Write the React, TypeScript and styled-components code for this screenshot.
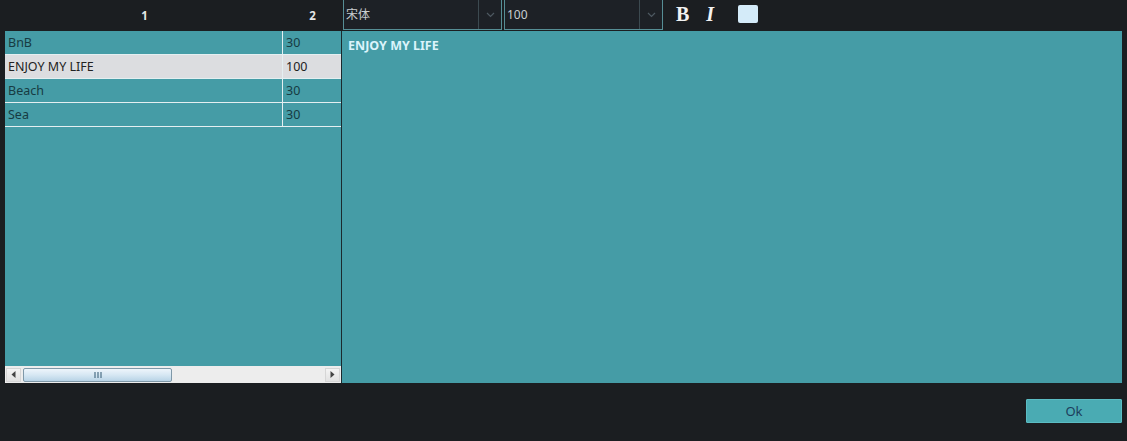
import styled, { createGlobalStyle } from 'styled-components'

const GlobalStyle = createGlobalStyle`
  html, body {
    margin: 0;
    padding: 0;
    background: #1b1e21;
  }
  body {
    font-family: "Noto Sans", "Noto Sans CJK SC", sans-serif;
    font-size: 12.5px;
  }
`

const Window = styled.div`
  width: 1127px;
  height: 441px;
  display: flex;
  flex-direction: column;
  background: #1b1e21;
  overflow: hidden;
`

const Main = styled.div`
  display: flex;
  padding-left: 5px;
  padding-right: 5px;
`

const LeftPane = styled.div`
  width: 336px;
  display: flex;
  flex-direction: column;
`

const HeaderRow = styled.div`
  height: 31px;
  display: flex;
  align-items: center;
  color: #e6e6e6;
  font-weight: 700;
  font-size: 11.5px;
`

const HeaderCell = styled.div<{ $width: number }>`
  width: ${({ $width }) => $width}px;
  text-align: center;
`

const TableBody = styled.div`
  height: 352px;
  background: #459ca6;
  display: flex;
  flex-direction: column;
`

const Rows = styled.div`
  flex: 1;
`

const Row = styled.div<{ $selected?: boolean }>`
  display: flex;
  height: 23px;
  border-bottom: 1px solid #e4eff1;
  background: ${({ $selected }) => ($selected ? '#dcdde0' : 'transparent')};
  color: ${({ $selected }) => ($selected ? '#222' : '#173b42')};
`

const Cell = styled.div<{ $width?: number }>`
  ${({ $width }) => ($width ? `width: ${$width}px;` : 'flex: 1;')}
  padding-left: 3px;
  line-height: 23px;
  white-space: nowrap;
  overflow: hidden;
  box-sizing: border-box;
  & + & {
    border-left: 1px solid #e4eff1;
  }
`

const ScrollBar = styled.div`
  height: 17px;
  background: #ededed;
  display: flex;
  align-items: center;
  padding: 0 1px;
  gap: 2px;
`

const ArrowButton = styled.div`
  width: 15px;
  height: 14px;
  box-sizing: border-box;
  border: 1px solid #d6d6d6;
  background: linear-gradient(#f4f4f4, #e2e2e2);
  display: flex;
  align-items: center;
  justify-content: center;
`

const Thumb = styled.div`
  width: 149px;
  height: 14px;
  box-sizing: border-box;
  border: 1px solid #7f98a8;
  border-radius: 2px;
  background: linear-gradient(#eef5fb, #d6e7f3 50%, #b8d3e6);
  display: flex;
  align-items: center;
  justify-content: center;
`

const Track = styled.div`
  flex: 1;
`

const RightPane = styled.div`
  flex: 1;
  display: flex;
  flex-direction: column;
`

const Toolbar = styled.div`
  height: 31px;
  display: flex;
  align-items: flex-start;
  padding-left: 2px;
`

const Combo = styled.div<{ $ml?: number }>`
  width: 159px;
  height: 31px;
  margin-top: -1px;
  margin-left: ${({ $ml }) => $ml ?? 0}px;
  box-sizing: border-box;
  border: 1px solid #568e95;
  background: #1d2126;
  display: flex;
  color: #c9cdd0;
  font-size: 12px;
`

const ComboText = styled.div`
  flex: 1;
  padding-left: 2px;
  line-height: 29px;
`

const ComboArrow = styled.div`
  width: 22px;
  border-left: 1px solid #3c4a50;
  display: flex;
  align-items: center;
  justify-content: center;
`

const StyleButton = styled.div<{ $italic?: boolean; $ml: number }>`
  margin-left: ${({ $ml }) => $ml}px;
  font-family: "Liberation Serif", serif;
  font-weight: 700;
  font-style: ${({ $italic }) => ($italic ? 'italic' : 'normal')};
  font-size: 20px;
  color: #f2f2f2;
  height: 29px;
  line-height: 29px;
`

const Swatch = styled.div`
  width: 20px;
  height: 18px;
  margin-top: 5px;
  margin-left: 24px;
  border-radius: 2px;
  background: #d4ebf9;
`

const Editor = styled.div`
  height: 352px;
  background: #459ca6;
  border-left: 1px solid #1b2a2e;
  padding: 6px 6px;
  box-sizing: border-box;
  color: #dcf4fb;
  font-weight: 700;
`

const Footer = styled.div`
  flex: 1;
  display: flex;
  justify-content: flex-end;
  padding: 16px 5px 0 0;
`

const OkButton = styled.button`
  width: 96px;
  height: 24px;
  background: #4aabb3;
  border: 1px solid #5bbcc3;
  border-radius: 1px;
  color: #1c3d5c;
  font-family: "Noto Sans", sans-serif;
  font-size: 13px;
  padding: 0;
`

const rows = [
  { name: 'BnB', size: '30' },
  { name: 'ENJOY MY LIFE', size: '100', selected: true },
  { name: 'Beach', size: '30' },
  { name: 'Sea', size: '30' },
]

const Chevron = () => (
  <svg width="9" height="6" viewBox="0 0 9 6">
    <path d="M1 1 L4.5 4.5 L8 1" stroke="#4d5961" strokeWidth="1.2" fill="none" />
  </svg>
)

const Triangle = ({ dir }: { dir: 'left' | 'right' }) => (
  <svg width="5" height="7" viewBox="0 0 5 7">
    <path d={dir === 'left' ? 'M4.5 0 L0.5 3.5 L4.5 7 Z' : 'M0.5 0 L4.5 3.5 L0.5 7 Z'} fill="#444" />
  </svg>
)

const Grip = () => (
  <svg width="8" height="6" viewBox="0 0 8 6">
    <path d="M1 0 V6 M4 0 V6 M7 0 V6" stroke="#4b6f86" strokeWidth="1.2" />
  </svg>
)

export default function App() {
  return (
    <Window>
      <GlobalStyle />
      <Main>
        <LeftPane>
          <HeaderRow>
            <HeaderCell $width={279}>1</HeaderCell>
            <HeaderCell $width={57}>2</HeaderCell>
          </HeaderRow>
          <TableBody>
            <Rows>
              {rows.map((r) => (
                <Row key={r.name} $selected={r.selected}>
                  <Cell $width={277}>{r.name}</Cell>
                  <Cell>{r.size}</Cell>
                </Row>
              ))}
            </Rows>
            <ScrollBar>
              <ArrowButton>
                <Triangle dir="left" />
              </ArrowButton>
              <Thumb>
                <Grip />
              </Thumb>
              <Track />
              <ArrowButton>
                <Triangle dir="right" />
              </ArrowButton>
            </ScrollBar>
          </TableBody>
        </LeftPane>
        <RightPane>
          <Toolbar>
            <Combo>
              <ComboText>宋体</ComboText>
              <ComboArrow>
                <Chevron />
              </ComboArrow>
            </Combo>
            <Combo $ml={2}>
              <ComboText>100</ComboText>
              <ComboArrow>
                <Chevron />
              </ComboArrow>
            </Combo>
            <StyleButton $ml={13}>B</StyleButton>
            <StyleButton $italic $ml={17}>I</StyleButton>
            <Swatch />
          </Toolbar>
          <Editor>ENJOY MY LIFE</Editor>
        </RightPane>
      </Main>
      <Footer>
        <OkButton>Ok</OkButton>
      </Footer>
    </Window>
  )
}
